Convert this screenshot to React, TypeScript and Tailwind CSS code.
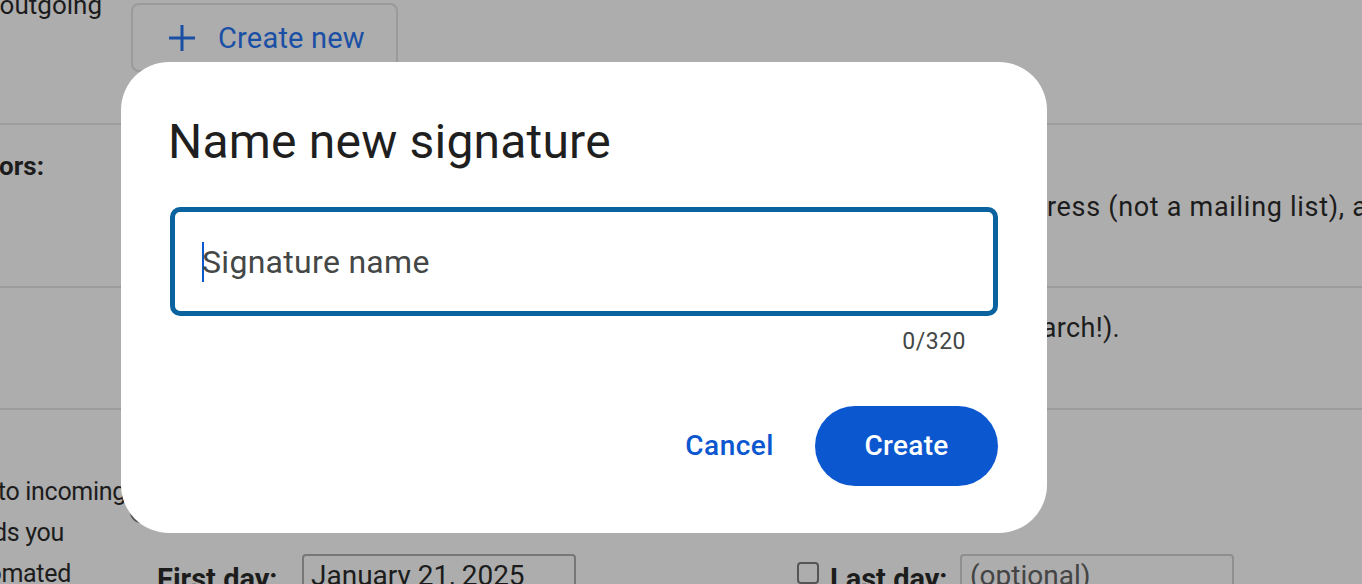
import React from "react";

const font = { fontFamily: "Roboto, 'Liberation Sans', Arial, sans-serif" };

function ClipLine({ text, pr, bold = false, h = 41 }: { text: string; pr: number; bold?: boolean; h?: number }) {
  return (
    <div className="flex justify-end overflow-hidden" style={{ paddingRight: pr, height: h }}>
      <span className={`shrink-0 whitespace-nowrap leading-[41px] ${bold ? "font-bold" : ""}`}>{text}</span>
    </div>
  );
}

export default function App() {
  return (
    <div className="relative w-[1362px] h-[584px] overflow-hidden bg-[#adadad] text-[#1c1c1c] text-[26px]" style={font}>
      {/* Background settings page */}
      <div className="flex flex-col">
        {/* Row 1 */}
        <div className="flex h-[125px] border-b-2 border-[#9c9c9c]">
          <div className="w-[131px] shrink-0 overflow-hidden -mt-[15px]">
            <ClipLine text="(appended at the end of all outgoing" pr={29} />
          </div>
          <div className="pt-[3px]">
            <div className="flex items-center gap-[22px] h-[69px] w-[267px] border-2 border-[#9a9a9a] rounded-[8px] pl-[35px] text-[#1a4fa6] text-[29px] tracking-[0.2px]">
              <svg width="28" height="28" viewBox="0 0 28 28" className="shrink-0">
                <path d="M14 1v26M1 14h26" stroke="#1a4fa6" strokeWidth="3" fill="none" />
              </svg>
              <span className="leading-[36px] mt-[1px]">Create new</span>
            </div>
          </div>
        </div>
        {/* Row 2 */}
        <div className="flex h-[163px] border-b-2 border-[#9c9c9c]">
          <div className="w-[131px] shrink-0 overflow-hidden pt-[21px]">
            <ClipLine text="Personal level indicators:" pr={87} bold />
          </div>
          <div className="flex-1 pt-[62px] overflow-hidden pl-[900px] text-[27px] tracking-[0.7px]">
            <div className="whitespace-nowrap leading-[41px]">dress (not a mailing list), and a double arrow</div>
          </div>
        </div>
        {/* Row 3 */}
        <div className="flex h-[122px] border-b-2 border-[#9c9c9c]">
          <div className="w-[131px] shrink-0" />
          <div className="flex-1 pt-[20px] overflow-hidden pl-[882px] text-[27px] tracking-[0.3px]">
            <div className="whitespace-nowrap leading-[41px]">search!).</div>
          </div>
        </div>
        {/* Row 4 */}
        <div className="flex">
          <div className="w-[131px] shrink-0 overflow-hidden pt-[61px] text-[25px] tracking-[-0.3px]">
            <ClipLine text="(sends an automated reply to incoming" pr={5} />
            <ClipLine text="messages. If a contact sends you" pr={67} />
            <ClipLine text="several messages, this automated" pr={60} />
          </div>
          <div className="flex-1 flex flex-col pl-[26px] pt-[91px]">
            <div className="h-[22px] flex items-start">
              <span className="w-[22px] h-[22px] -ml-[27px] rounded-full border-2 border-[#555]" />
            </div>
            <div className="flex items-start mt-[31px] text-[28px]">
              <span className="font-bold text-[29px] mt-[4px] whitespace-nowrap w-[145px]">First day:</span>
              <div className="w-[274px] h-[44px] border-2 border-[#777] rounded-[4px] px-[7px] leading-[40px] whitespace-nowrap">January 21, 2025</div>
              <span className="w-[22px] h-[22px] ml-[221px] mt-[8px] border-2 border-[#555] rounded-[4px]" />
              <span className="font-bold text-[29px] mt-[4px] ml-[11px] whitespace-nowrap w-[130px]">Last day:</span>
              <div className="w-[274px] h-[44px] border-2 border-[#8f8f8f] rounded-[4px] px-[8px] leading-[40px] whitespace-nowrap text-[#444]">(optional)</div>
            </div>
          </div>
        </div>
      </div>

      {/* Dialog overlay */}
      <div className="absolute left-[121px] top-[62px] w-[926px] h-[471px] bg-white rounded-[48px] px-[49px] pt-[48px]">
        <h1 className="text-[48px] leading-[64px] text-[#1f1f1f] tracking-[0.2px] -ml-[2px]">Name new signature</h1>
        <div className="mt-[33px] h-[109px] border-[5px] border-[#0a629f] rounded-[10px] flex items-center pl-[27px]">
          <span className="w-[2px] h-[40px] bg-[#0b57d0] mr-[-2px]" />
          <span className="text-[32px] text-[#444746] tracking-[0.3px]">Signature name</span>
        </div>
        <div className="flex justify-end pr-[32px] mt-[12px] text-[23px] text-[#444746] leading-[28px] tracking-[0.5px]">0/320</div>
        <div className="flex justify-end items-center mt-[50px] gap-[41px]">
          <span className="text-[28px] font-medium text-[#0b57d0] tracking-[0.5px]">Cancel</span>
          <button className="w-[183px] h-[80px] rounded-full bg-[#0b57d0] text-white text-[28px] font-medium tracking-[0.3px]">Create</button>
        </div>
      </div>
    </div>
  );
}
